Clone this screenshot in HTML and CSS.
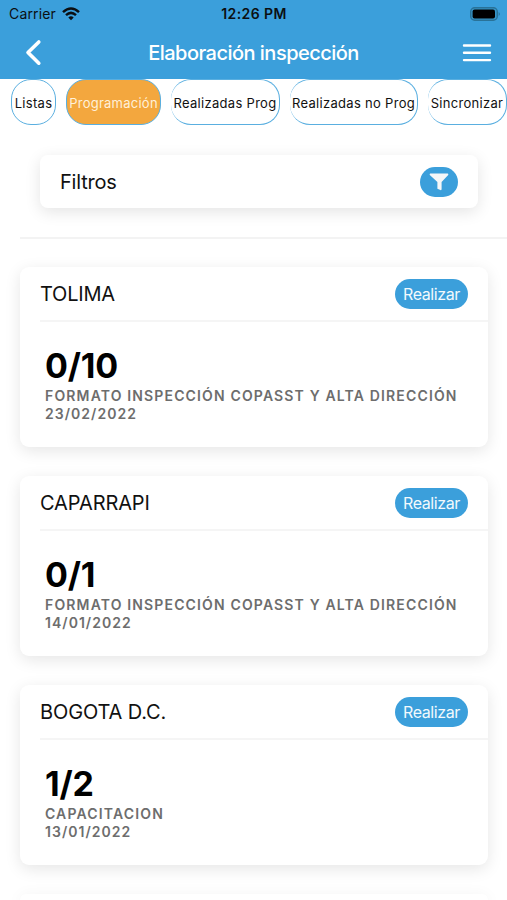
FILE: index.html
```html
<!DOCTYPE html>
<html lang="es">
<head>
<meta charset="utf-8">
<title>Elaboración inspección</title>
<link rel="stylesheet" href="styles.css">
</head>
<body>
<header class="header">
  <div class="status">
    <div class="carrier"><span class="carrier-name">Carrier</span>
      <svg width="18" height="14" viewBox="0 0 18 14" fill="none" stroke="#0b0f12" stroke-width="2.5"><path d="M1 5.1Q9-2.1 17 5.1"/><path d="M4 8.1Q9 3.7 14 8.1"/><path d="M6.3 10.4Q9 8.1 11.7 10.4L9 13.2Z" fill="#0b0f12" stroke="none"/></svg>
    </div>
    <span class="time">12:26 PM</span>
    <svg class="battery" width="31" height="14" viewBox="0 0 31 14"><rect x=".7" y=".7" width="26.6" height="12.6" rx="4" fill="#3796c9" stroke="#297298" stroke-width="1.4"/><rect x="2.6" y="2.5" width="22.4" height="9" rx="2" fill="#000"/><path d="M28.7 5Q31 7 28.7 9Z" fill="#297298"/></svg>
  </div>
  <div class="navbar">
    <svg class="back" width="17" height="28" viewBox="0 0 17 28" fill="none" stroke="#fff" stroke-width="3.6" stroke-linecap="round" stroke-linejoin="round"><path d="M13.8 3 3 13.5l10.8 10.7"/></svg>
    <h1 class="title">Elaboración inspección</h1>
    <svg class="menu" width="30" height="20" viewBox="0 0 30 20" stroke="#fff" stroke-width="2.4" stroke-linecap="round"><path d="M2 2.5h26M2 9.8h26M2 17.1h26"/></svg>
  </div>
</header>
<nav class="tabs">
  <div class="tab listas"><span>Listas</span></div>
  <div class="tab prog active"><span>Programación</span></div>
  <div class="tab done open"><span>Realizadas Prog</span></div>
  <div class="tab notprog open"><span>Realizadas no Prog</span></div>
  <div class="tab sync open"><span>Sincronizar</span></div>
</nav>
<main>
  <section class="filters">
    <span class="filters-label">Filtros</span>
    <div class="filter-button">
      <svg width="20" height="18" viewBox="0 0 20 18" fill="#f5f7f8"><path d="M1.3.5h17.4q1 .4.5 1.6L12.6 9v7.3q-.2 1-1.2.8l-3-1.4V9L.8 2.1Q.3.9 1.3.5Z"/></svg>
    </div>
  </section>
  <div class="divider"></div>
  <section class="cards">
    <article class="card">
      <div class="card-head"><h2 class="tolima">TOLIMA</h2><div class="action"><span>Realizar</span></div></div>
      <div class="card-body"><div class="count">0/10</div><div class="meta">FORMATO INSPECCIÓN COPASST Y ALTA DIRECCIÓN</div><div class="meta date">23/02/2022</div></div>
    </article>
    <article class="card">
      <div class="card-head"><h2>CAPARRAPI</h2><div class="action"><span>Realizar</span></div></div>
      <div class="card-body"><div class="count">0/1</div><div class="meta">FORMATO INSPECCIÓN COPASST Y ALTA DIRECCIÓN</div><div class="meta date">14/01/2022</div></div>
    </article>
    <article class="card">
      <div class="card-head"><h2>BOGOTA D.C.</h2><div class="action"><span>Realizar</span></div></div>
      <div class="card-body"><div class="count">1/2</div><div class="meta">CAPACITACION</div><div class="meta date">13/01/2022</div></div>
    </article>
    <article class="card next"></article>
  </section>
</main>
</body>
</html>
```
FILE: styles.css
```css
* { box-sizing: border-box; }
html, body { height: 100%; overflow: hidden; }
body { margin: 0; background: #fff; color: #111; font-family: Inter, "Liberation Sans", sans-serif; }
h1, h2 { margin: 0; }
svg { display: block; flex: none; }
.header { height: 79px; background: #3b9fdb; }
.status { height: 27px; padding: 0 6px 0 9px; display: grid; grid-template-columns: 1fr auto 1fr; align-items: center; color: #0b0f12; }
.carrier { display: flex; align-items: center; gap: 6px; font-size: 14px; letter-spacing: .15px; }
.time { font-size: 14px; font-weight: 600; letter-spacing: .4px; margin-right: 2px; }
.battery { justify-self: end; }
.navbar { height: 52px; padding: 0 15px; display: grid; grid-template-columns: 1fr auto 1fr; align-items: center; }
.menu { justify-self: end; }
.title { color: #fff; font-size: 20px; font-weight: 500; letter-spacing: -.52px; white-space: nowrap; }
.back { margin: 0 0 0 10px; }
.tabs { display: flex; gap: 10px; padding-left: 11px; height: 46px; }
.tab { height: 46px; flex: none; border: 1.5px solid #5aafe0; border-radius: 20px; display: flex; align-items: center; justify-content: center; white-space: nowrap; font-size: 13px; font-weight: 400; letter-spacing: .3px; }
.tab span { padding-top: 1px; }
.listas { width: 45px; }
.prog { width: 95px; }
.done { width: 109px; }
.notprog { width: 128px; }
.sync { width: 79px; }
.active { background: #f3a73e; color: #fff0d9; }
.active span { letter-spacing: .25px; }
.open { border-left: 0 solid #5aafe0; }
.filters { margin: 30px 29px 0 40px; height: 53px; padding: 0 20px; border-radius: 8px; box-shadow: 0 4px 16px rgba(0,0,0,.11); display: flex; align-items: center; justify-content: space-between; }
.filters-label { font-size: 20px; letter-spacing: -.2px; }
.filter-button { width: 38px; height: 30px; border-radius: 15px; background: #3b9fdb; display: flex; align-items: center; justify-content: center; }
.divider { height: 2px; margin: 29px 0 0 20px; background: #f3f3f3; }
.cards { display: flex; flex-direction: column; gap: 29px; padding: 28px 19px 0 20px; }
.card { height: 180px; flex: none; border-radius: 9px; background: #fff; box-shadow: 0 4px 16px rgba(0,0,0,.1); }
.card-head { height: 55px; margin-left: 20px; padding-right: 20px; border-bottom: 2px solid #f5f5f5; display: flex; align-items: center; justify-content: space-between; }
.card h2 { font-size: 20px; font-weight: 400; letter-spacing: -.12px; }
.card .tolima { letter-spacing: -.2px; }
.next { height: 6px; border-radius: 9px 9px 0 0; }
.action { width: 73px; height: 30px; border-radius: 15px; background: #3b9fdb; color: #f2f9fd; font-size: 16px; line-height: 20px; letter-spacing: -.4px; display: flex; align-items: center; justify-content: center; }
.card-body { padding: 23px 25px 0; }
.count { height: 42px; line-height: 41px; font-size: 34px; font-weight: 700; letter-spacing: -.2px; color: #000; }
.meta { font-size: 14px; line-height: 18px; font-weight: 600; letter-spacing: 1.15px; color: #6d6d6d; white-space: nowrap; }
.date { letter-spacing: 1.03px; }
```
